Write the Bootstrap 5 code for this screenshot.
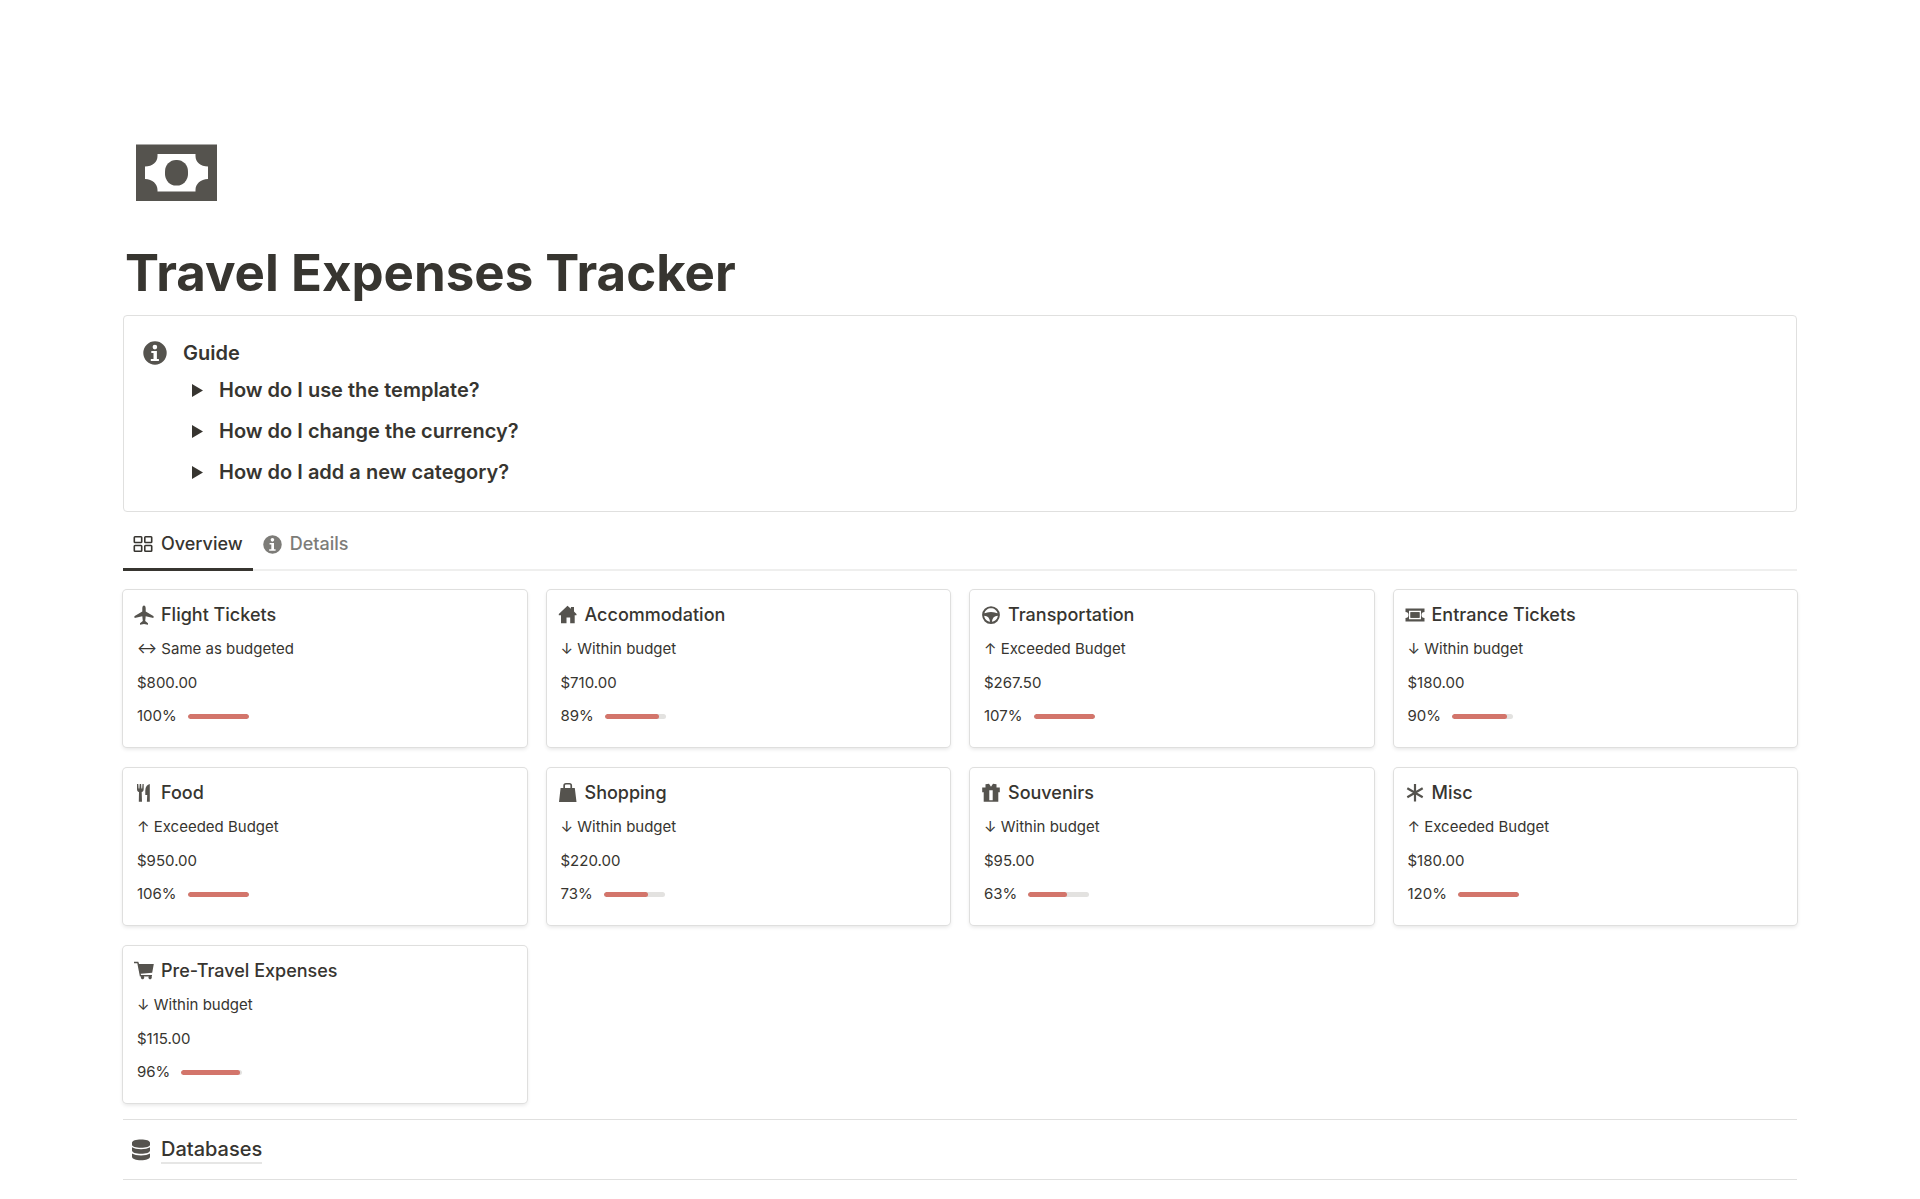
<!DOCTYPE html>
<html lang="en">
<head>
<meta charset="utf-8">
<meta name="viewport" content="width=device-width, initial-scale=1">
<title>Travel Expenses Tracker</title>
<link href="https://cdn.jsdelivr.net/npm/bootstrap@5.3.0/dist/css/bootstrap.min.css" rel="stylesheet">
<style>
  :root { --ink: #373530; --icon: #55534e; --line: #e0e0df; }
  body { font-family: Inter, "Liberation Sans", sans-serif; color: var(--ink); background: #fff; }
  .page-wrap { padding: 144px 123px 0; }
  @media (max-width: 1200px) { .page-wrap { padding: 48px 24px; } }
  svg { flex: none; fill: var(--icon); }
  .page-icon { width: 81px; height: 57px; margin-left: 13px; }
  .page-title { font-size: 51px; line-height: 62px; font-weight: 700; margin: 41px 0 11px 2px; }
  .guide-box { border: 1px solid var(--line); border-radius: 4px; padding: 21px 19px 18px; }
  .guide-head { font-size: 20px; line-height: 32px; font-weight: 600; gap: 16px; }
  .guide-list { padding: 1px 0 0 49px; font-size: 20px; line-height: 41px; font-weight: 600; }
  .guide-list summary { display: flex; align-items: center; gap: 16px; cursor: pointer; }
  .guide-list svg { fill: var(--ink); }
  .view-tabs { border-bottom: 2px solid #efefee; margin-top: 8px; }
  .view-tabs .nav-link { display: flex; align-items: center; gap: 8px; padding: 0 10px; margin-bottom: -2px; background: none;
    font-size: 18px; line-height: 48px; font-weight: 500; color: #7d7c78; border: 0; border-bottom: 3px solid transparent; border-radius: 0; }
  .view-tabs .nav-link.active { color: var(--ink); border-bottom-color: var(--ink); }
  .view-tabs .nav-link svg { fill: currentColor; }
  .budget-grid { --bs-gutter-x: 20px; --bs-gutter-y: 21px; padding-top: 19px; }
  .budget-card { border: 0; border-radius: 4px; padding: 8px 14px 15px; box-shadow: 0 0 0 1px #dfdfde, 0 2px 4px rgba(15,15,15,.12); color: var(--ink); font-size: 15px; line-height: 34px; }
  .budget-card h2 { display: flex; align-items: center; gap: 7px; font-size: 18px; line-height: 34px; font-weight: 500; margin: 0 0 0 -3px; }
  .budget-card p { margin: 0; }
  .usage { display: flex; align-items: center; gap: 11px; line-height: 32px; }
  .usage .progress { width: 61px; height: 5px; border-radius: 3px; background: #e3e2e0; }
  .usage .progress-bar { background: #d3756b; border-radius: 3px; }
  .db-section { border: solid var(--line); border-width: 1px 0; margin-top: 16px; height: 61px; padding-left: 8px; gap: 10px; }
  .db-section a { font-size: 20px; line-height: 26px; font-weight: 500; color: var(--ink); text-decoration: none; border-bottom: 2px solid #e6e6e5; }
</style>
<script src="https://cdn.jsdelivr.net/npm/bootstrap@5.3.0/dist/js/bootstrap.bundle.min.js"></script>
</head>
<body>
<svg width="0" height="0" class="position-absolute" aria-hidden="true">
  <symbol id="i-info" viewBox="0 0 24 24"><path fill-rule="evenodd" d="M12 .3a11.700 11.700 0 1 0 0 23.400A11.700 11.700 0 0 0 12 .3zM11.900 3.800a2.300 2.300 0 1 1 0 4.600 2.300 2.300 0 0 1 0-4.600zM8.300 10h5.600v8h2v2H7.800v-2h2.700v-6H8.300z"/></symbol>
  <symbol id="i-tri" viewBox="0 0 11 13"><path d="M0 0l11 6.500L0 13z"/></symbol>
</svg>

<main class="page-wrap">
  <svg class="page-icon d-block" viewBox="0 0 81 57" role="img" aria-label="Banknote"><path fill-rule="evenodd" d="M0 0.500h81v56.500H0zM21.500 10v2c0 6-5 10.500-12.500 10.500v12.500c7.500 0 12.500 5 12.500 11v1.500h38V46c0-6 5-11 12.500-11V22.500C64.500 22.500 59.500 18 59.500 12v-2z"/><rect x="29" y="16" width="23" height="25.500" rx="11" ry="11.500"/></svg>
  <h1 class="page-title">Travel Expenses Tracker</h1>

  <section class="guide-box">
    <div class="guide-head d-flex align-items-center"><svg width="24" height="24"><use href="#i-info"/></svg><span>Guide</span></div>
    <div class="guide-list">
      <details><summary><svg width="11" height="13"><use href="#i-tri"/></svg>How do I use the template?</summary></details>
      <details><summary><svg width="11" height="13"><use href="#i-tri"/></svg>How do I change the currency?</summary></details>
      <details><summary><svg width="11" height="13"><use href="#i-tri"/></svg>How do I add a new category?</summary></details>
    </div>
  </section>

  <div class="view-tabs nav" role="tablist">
    <button type="button" class="nav-link active" role="tab" aria-selected="true"><svg width="20" height="18" viewBox="0 0 20 18"><path fill-rule="evenodd" d="M2 1h6a1.500 1.500 0 0 1 1.500 1.500v4.300A1.500 1.500 0 0 1 8 8.300H2A1.500 1.500 0 0 1 .5 6.800V2.500A1.500 1.500 0 0 1 2 1zm.1 1.500v4.300h5.800V2.500zM12.500 1h5.500a1.500 1.500 0 0 1 1.500 1.500v4.300A1.500 1.500 0 0 1 18 8.300h-5.500A1.500 1.500 0 0 1 11 6.800V2.500A1.500 1.500 0 0 1 12.500 1zm.1 1.500v4.300h5.300V2.500zM2 9.800h6a1.500 1.500 0 0 1 1.500 1.500v4.300A1.500 1.500 0 0 1 8 17.100H2a1.500 1.500 0 0 1-1.500-1.500v-4.300A1.500 1.500 0 0 1 2 9.800zm.1 1.500v4.300h5.800v-4.300zM12.500 9.800h5.500a1.500 1.500 0 0 1 1.500 1.500v4.300a1.500 1.500 0 0 1-1.500 1.500h-5.500a1.500 1.500 0 0 1-1.500-1.500v-4.300a1.500 1.500 0 0 1 1.500-1.500zm.1 1.500v4.300h5.300v-4.300z"/></svg>Overview</button>
    <button type="button" class="nav-link" role="tab" aria-selected="false"><svg width="19" height="19"><use href="#i-info"/></svg>Details</button>
  </div>

  <div class="row row-cols-1 row-cols-md-2 row-cols-lg-4 budget-grid">
    <div class="col"><article class="card budget-card">
      <h2><svg width="20" height="20" viewBox="0 0 20 20"><path d="M10 .5c1 0 1.700 1.200 1.700 3v2.900l7.600 4.500c.4.300.5.800.2 1.500l-.2.700-7.600-1.800-.5 4.600 2.800 2.300v1.500l-4-.7-4 .7v-1.500l2.800-2.300-.5-4.600-7.600 1.800-.2-.7c-.3-.7-.2-1.200.2-1.500l7.600-4.500V3.500c0-1.800.7-3 1.700-3z"/></svg>Flight Tickets</h2>
      <p>↔ Same as budgeted</p><p>$800.00</p>
      <div class="usage">100%<div class="progress"><div class="progress-bar" style="width:100%"></div></div></div>
    </article></div>
    <div class="col"><article class="card budget-card">
      <h2><svg width="20" height="20" viewBox="0 0 20 20"><path d="M9.500.8l3.400 3V1.900H16v4.700l2.500 2.300v1.400h-1.800v7.900h-4.500v-5.700H8.500v5.700H3v-7.900H.8V8.900z"/></svg>Accommodation</h2>
      <p>↓ Within budget</p><p>$710.00</p>
      <div class="usage">89%<div class="progress"><div class="progress-bar" style="width:89%"></div></div></div>
    </article></div>
    <div class="col"><article class="card budget-card">
      <h2><svg width="20" height="20" viewBox="0 0 20 20"><path fill-rule="evenodd" d="M10 1.200a8.900 8.900 0 1 0 0 17.800 8.900 8.900 0 0 0 0-17.800zM10 3.300c3.300 0 5.900 2.100 6.600 5-1.800-.3-3.500-1.200-6.600-1.200s-4.800.9-6.600 1.200c.7-2.900 3.300-5 6.600-5zM3.200 10.800c3.400.2 5.500 2 5.800 6-3.100-.4-5.500-2.900-5.800-6zM11 16.800c.3-4 2.400-5.800 5.800-6-.3 3.100-2.700 5.600-5.800 6z"/></svg>Transportation</h2>
      <p>↑ Exceeded Budget</p><p>$267.50</p>
      <div class="usage">107%<div class="progress"><div class="progress-bar" style="width:100%"></div></div></div>
    </article></div>
    <div class="col"><article class="card budget-card">
      <h2><svg width="20" height="20" viewBox="0 0 20 20"><path fill-rule="evenodd" d="M.5 3.500h19V7a3 3 0 0 0 0 6v3.500H.5V13a3 3 0 0 0 0-6zM4 5.800v8.400h12V5.800zM5.500 7.200h9v5.600h-9z"/><path d="M5.500 7.200h9v5.600h-9z"/></svg>Entrance Tickets</h2>
      <p>↓ Within budget</p><p>$180.00</p>
      <div class="usage">90%<div class="progress"><div class="progress-bar" style="width:90%"></div></div></div>
    </article></div>
    <div class="col"><article class="card budget-card">
      <h2><svg width="20" height="20" viewBox="0 0 20 20"><path d="M3 1h1.300l.3 4.600h.8L5.700 1h1.400l.3 4.600h.8L8.500 1h1.200v5c0 1.800-.7 2.700-2 3.100l.3 9.700H4.800L5 9.100C3.700 8.700 3 7.800 3 6zM15.800 1v17.800h-2.900l.3-6.700h-1.900V7.500c0-3.800 2-6.100 4.500-6.500z"/></svg>Food</h2>
      <p>↑ Exceeded Budget</p><p>$950.00</p>
      <div class="usage">106%<div class="progress"><div class="progress-bar" style="width:100%"></div></div></div>
    </article></div>
    <div class="col"><article class="card budget-card">
      <h2><svg width="20" height="20" viewBox="0 0 20 20"><path fill-rule="evenodd" d="M5.300 5V2.700A2.700 2.700 0 0 1 8 0h3.400a2.700 2.700 0 0 1 2.700 2.700V5h2.700l1.700 14H1L2.600 5zM7 5h5.400V2.600a1 1 0 0 0-1-1H8a1 1 0 0 0-1 1z"/></svg>Shopping</h2>
      <p>↓ Within budget</p><p>$220.00</p>
      <div class="usage">73%<div class="progress"><div class="progress-bar" style="width:73%"></div></div></div>
    </article></div>
    <div class="col"><article class="card budget-card">
      <h2><svg width="20" height="20" viewBox="0 0 20 20"><path fill-rule="evenodd" d="M4.500 1.200L8 .7l2 3 2-3 3.500.5V4.500h3.300v4.800h-1.500v9.500H2.700V9.300H1.200V4.500h3.300zM8.300 7.200v10h3.400v-10z"/></svg>Souvenirs</h2>
      <p>↓ Within budget</p><p>$95.00</p>
      <div class="usage">63%<div class="progress"><div class="progress-bar" style="width:63%"></div></div></div>
    </article></div>
    <div class="col"><article class="card budget-card">
      <h2><svg width="20" height="20" viewBox="0 0 20 20"><path fill="none" stroke="#55534e" stroke-width="2.200" d="M10 1v17.500M2.300 5.300l15.400 9M17.700 5.300l-15.400 9"/></svg>Misc</h2>
      <p>↑ Exceeded Budget</p><p>$180.00</p>
      <div class="usage">120%<div class="progress"><div class="progress-bar" style="width:100%"></div></div></div>
    </article></div>
    <div class="col"><article class="card budget-card">
      <h2><svg width="20" height="20" viewBox="0 0 20 20"><path d="M0 .8h4.300l.8 2.200h14.700l-1.600 8.700-11.500 1 .3 1.200h11v1.500h-.6a1.700 1.700 0 1 1-2.600 0H9.900a1.700 1.700 0 1 1-2.700 0H5.900L3.300 2.300H0z"/></svg>Pre-Travel Expenses</h2>
      <p>↓ Within budget</p><p>$115.00</p>
      <div class="usage">96%<div class="progress"><div class="progress-bar" style="width:96%"></div></div></div>
    </article></div>
  </div>

  <section class="db-section d-flex align-items-center">
    <svg width="20" height="22" viewBox="0 0 20 22"><path d="M1 3.800C1 1.700 5 .5 10 .5s9 1.200 9 3.300v1.900C19 7.500 15 8.700 10 8.700S1 7.500 1 5.700zM1 8.300c2 1.300 5.300 1.900 9 1.900s7-.6 9-1.900v3.100c0 2-4 3.300-9 3.300s-9-1.300-9-3.300zM1 14.500c2 1.300 5.300 1.900 9 1.900s7-.6 9-1.900v3.200c0 2.200-4 3.600-9 3.600s-9-1.400-9-3.600z"/></svg>
    <a href="#databases">Databases</a>
  </section>
</main>
</body>
</html>
